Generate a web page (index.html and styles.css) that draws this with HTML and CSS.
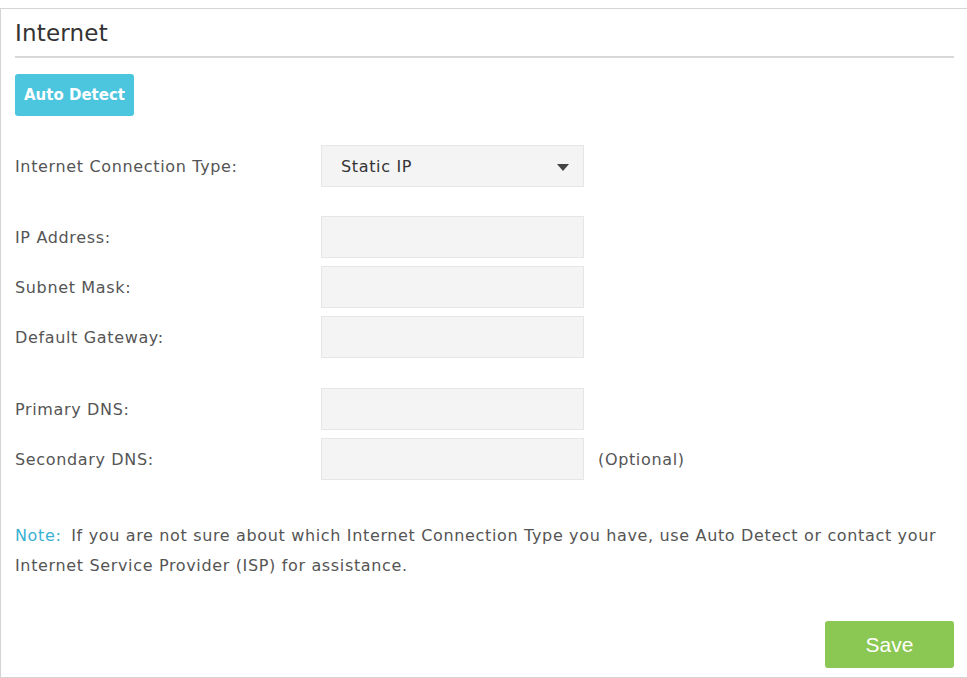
FILE: index.html
```html
<!DOCTYPE html>
<html lang="en">
<head>
    <meta charset="UTF-8">
    <title>Internet</title>
    <link rel="stylesheet" href="styles.css">
</head>
<body>

<div class="panel">
    <h2 class="panel-title">Internet</h2>

    <button class="btn btn-detect">Auto Detect</button>

    <!-- Connection type -->
    <div class="row row-type">
        <label>Internet Connection Type:</label>
        <div class="select">
            <span>Static IP</span>
            <span class="arrow"></span>
        </div>
    </div>

    <!-- Address fields -->
    <div class="group">
        <div class="row">
            <label>IP Address:</label>
            <input type="text">
        </div>
        <div class="row">
            <label>Subnet Mask:</label>
            <input type="text">
        </div>
        <div class="row">
            <label>Default Gateway:</label>
            <input type="text">
        </div>
    </div>

    <!-- DNS fields -->
    <div class="group">
        <div class="row">
            <label>Primary DNS:</label>
            <input type="text">
        </div>
        <div class="row">
            <label>Secondary DNS:</label>
            <input type="text">
            <span class="hint">(Optional)</span>
        </div>
    </div>

    <p class="note"><span class="note-label">Note:</span> If you are not sure about which Internet Connection Type you have, use Auto Detect or contact your Internet Service Provider (ISP) for assistance.</p>

    <div class="actions">
        <button class="btn btn-save">Save</button>
    </div>
</div>

</body>
</html>
```

FILE: styles.css
```css
/* General */
body {
    margin: 0;
    background-color: #fff;
    font-family: "DejaVu Sans", Verdana, sans-serif;
    font-size: 16px;
    letter-spacing: 0.65px;
    color: #555;
}

.panel {
    margin-top: 8px;
    height: 670px;
    border: 1px solid #d4d4d4;
    border-right: none;
    padding: 0 13px 0 14px;
    box-sizing: border-box;
}

.panel-title {
    margin: 0;
    padding: 11px 0 10px 0;
    font-size: 23px;
    font-weight: normal;
    letter-spacing: 0.2px;
    color: #333;
    border-bottom: 2px solid #d8d8d8;
}

/* Buttons */
.btn {
    border: none;
    color: #fff;
    font-family: inherit;
    cursor: pointer;
    border-radius: 3px;
}

.btn-detect {
    display: block;
    margin-top: 16px;
    height: 42px;
    padding: 0 9px;
    background-color: #4cc5de;
    font-size: 15px;
    font-weight: bold;
    letter-spacing: 0;
}

.btn-save {
    height: 47px;
    width: 129px;
    background-color: #8bc753;
    font-size: 21px;
    letter-spacing: 0;
    font-family: "Liberation Sans", Arial, sans-serif;
}

/* Form rows */
.row {
    display: flex;
    align-items: center;
    height: 42px;
    margin-bottom: 8px;
}

.row label {
    width: 306px;
    flex-shrink: 0;
}

.row-type {
    margin-top: 29px;
    margin-bottom: 29px;
}

.group {
    margin-bottom: 30px;
}

.group .row:last-child {
    margin-bottom: 0;
}

.row input,
.select {
    width: 263px;
    height: 42px;
    box-sizing: border-box;
    background-color: #f4f4f4;
    border: 1px solid #e6e6e6;
    font-family: inherit;
    font-size: 16px;
}

.select {
    display: flex;
    align-items: center;
    justify-content: space-between;
    padding: 0 14px 0 19px;
    color: #333;
}

.arrow {
    width: 0;
    height: 0;
    border-left: 6px solid transparent;
    border-right: 6px solid transparent;
    border-top: 7px solid #444;
    margin-top: 3px;
}

.hint {
    margin-left: 14px;
}

/* Note */
.note {
    margin: 41px 0 0 0;
    line-height: 30px;
}

.note-label {
    color: #3ab1d3;
    margin-right: 4px;
}

.actions {
    display: flex;
    justify-content: flex-end;
    margin-top: 40px;
}
```
